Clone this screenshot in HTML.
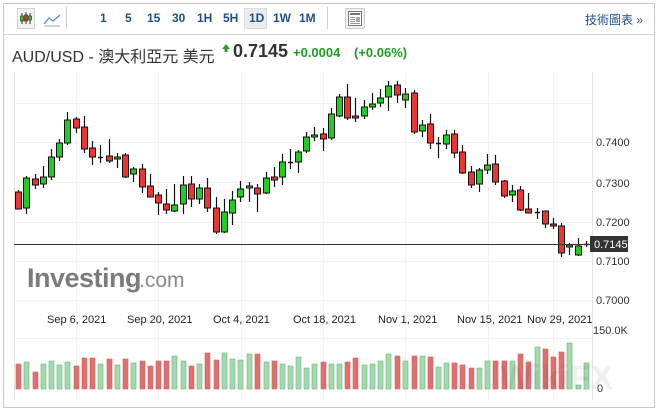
<!DOCTYPE html>
<html><head><meta charset="utf-8"><style>
*{margin:0;padding:0;box-sizing:border-box}
body{width:658px;height:409px;background:#fff;font-family:"Liberation Sans","Noto Sans CJK TC",sans-serif;position:relative;overflow:hidden}
.frame{position:absolute;left:3px;top:3px;width:652px;height:405px;border:1px solid #c8c8c8}
.tb{position:absolute;left:3px;top:3px;width:652px;height:32px;border-bottom:1px solid #d6d6d6}
.t{position:absolute;font-size:12px;color:#1d4f91;font-weight:bold;top:11px}
.sep{position:absolute;top:7px;width:1px;height:22px;background:#d0d0d0}
</style></head><body>
<div class="frame"></div>
<div class="tb"></div>
<div style="position:absolute;left:17px;top:8px;width:18px;height:21px;border:1px solid #d4d4d4;background:#f3f3f3"></div>
<svg style="position:absolute;left:17px;top:8px" width="18" height="21"><path d="M5 5v11M9 4v12M13 5v11" stroke="#333" stroke-width="1"/><rect x="3.5" y="8" width="3" height="5" fill="#2c2" stroke="#333" stroke-width=".7"/><rect x="7.5" y="7" width="3" height="6" fill="#e22" stroke="#333" stroke-width=".7"/><rect x="11.5" y="8" width="3" height="4" fill="#2c2" stroke="#333" stroke-width=".7"/></svg>
<svg style="position:absolute;left:42px;top:10px" width="20" height="18"><path d="M2 14L7 8L11 11L18 5" stroke="#5a8ec5" stroke-width="1.3" fill="none"/><path d="M2 16H18" stroke="#9ab" stroke-width="1"/></svg>
<div class="sep" style="left:66px"></div>
<div class="t" style="left:100px">1</div>
<div class="t" style="left:125px">5</div>
<div class="t" style="left:147px">15</div>
<div class="t" style="left:172px">30</div>
<div class="t" style="left:197px">1H</div>
<div class="t" style="left:223px">5H</div>
<div style="position:absolute;left:244px;top:8px;width:23px;height:21px;background:#ececec;border:1px solid #dcdcdc"></div>
<div class="t" style="left:249px">1D</div>
<div class="t" style="left:273px">1W</div>
<div class="t" style="left:299px">1M</div>
<div class="sep" style="left:327px"></div>
<div style="position:absolute;left:345px;top:8px;width:20px;height:21px;border:1px solid #ccc;background:#f2f2f2"></div>
<svg style="position:absolute;left:348px;top:11px" width="14" height="15"><rect x="0.5" y="0.5" width="13" height="14" fill="#fff" stroke="#777"/><rect x="2" y="2" width="10" height="2" fill="#777"/><path d="M2 6.5h5M2 8.5h5M2 10.5h5M2 12.5h10" stroke="#999"/><rect x="8" y="6" width="4" height="5" fill="#aaa"/></svg>
<div style="position:absolute;left:585px;top:11px;font-size:12px;color:#1d4f91">技術圖表 »</div>

<div style="position:absolute;left:12px;top:43px;font-size:16px;color:#333;white-space:nowrap">AUD/USD - 澳大利亞元 美元</div>
<svg style="position:absolute;left:222px;top:44px" width="8" height="8"><path d="M4 0L8 5H5.5V8H2.5V5H0Z" fill="#2a9d2a"/></svg>
<div style="position:absolute;left:233px;top:41px;font-size:18px;font-weight:bold;color:#333">0.7145</div>
<div style="position:absolute;left:293px;top:45px;font-size:13px;font-weight:bold;color:#1e9e1e">+0.0004</div>
<div style="position:absolute;left:354px;top:45px;font-size:13px;font-weight:bold;color:#1e9e1e">(+0.06%)</div>

<svg id="c" style="position:absolute;left:0;top:0" width="658" height="409" font-family="Liberation Sans, sans-serif">
<g stroke="#f1f2f5" stroke-width="1">
<path d="M14 103.5H592M14 142.5H592M14 182.5H592M14 222.5H592M14 261.5H592M14 300.5H592"/>
<path d="M76.5 72V400M158.5 72V400M241.5 72V400M323.5 72V400M405.5 72V400M488.5 72V400M553.5 72V400"/>
<path d="M14 338.5H592"/>
</g>
<path d="M14.5 72V400" stroke="#e2e4ea"/>
<path d="M592.5 72V400" stroke="#e2e4ea"/>
<g id="cs"></g>
<g id="vs"></g>
<path d="M14 244.5H590" stroke="#333" stroke-width="1"/>
<rect x="590" y="236" width="38" height="16" fill="#333"/>
<text x="594" y="248" font-size="11" fill="#fff">0.7145</text>
<g font-size="11" fill="#333">
<text x="596" y="146">0.7400</text>
<text x="596" y="187">0.7300</text>
<text x="596" y="226">0.7200</text>
<text x="596" y="265">0.7100</text>
<text x="596" y="304">0.7000</text>
<text x="593" y="334">150.0K</text>
<text x="597" y="392">0</text>
</g>
<g font-size="11" fill="#222">
<text x="47" y="323">Sep 6, 2021</text>
<text x="127" y="323">Sep 20, 2021</text>
<text x="213" y="323">Oct 4, 2021</text>
<text x="293" y="323">Oct 18, 2021</text>
<text x="378" y="323">Nov 1, 2021</text>
<text x="457" y="323">Nov 15, 2021</text>
<text x="527" y="323">Nov 29, 2021</text>
</g>
<text x="27" y="287" font-size="27" font-weight="bold" fill="#7b7b7b" letter-spacing="-0.5">Investing</text>
<text x="139" y="287" font-size="21" fill="#8a8a8a">.com</text>
<text x="500" y="389" font-size="34" font-weight="bold" fill="#000" opacity="0.06">WikiFX</text>
</svg>
<script>
var C=[[18,'R',192,209,190,209],[26,'G',178,208,176,214],[35,'R',179,185,174,189],[43,'G',177,184,166,188],[51,'G',157,177,149,180],[59,'G',143,157,139,161],[67,'G',120,143,112,145],[76,'R',119,128,117,133],[84,'R',127,149,116,153],[92,'R',148,157,141,165],[100,'D',157,157,145,163],[109,'R',156,161,139,163],[117,'G',157,159,153,168],[125,'R',155,177,153,178],[133,'G',169,174,167,182],[142,'R',169,187,164,193],[150,'R',186,197,174,197],[158,'R',195,203,192,215],[166,'R',204,210,189,214],[174,'G',205,211,184,212],[183,'G',185,204,176,214],[191,'R',184,199,176,207],[199,'G',188,199,184,204],[207,'R',188,208,178,212],[216,'R',208,232,197,234],[224,'G',212,232,199,233],[232,'G',200,213,191,225],[240,'G',189,197,181,202],[249,'G',186,188,182,202],[257,'R',188,194,184,212],[266,'G',178,193,172,194],[274,'R',177,180,167,187],[282,'G',162,177,154,185],[290,'D',162,162,149,169],[298,'G',152,162,150,173],[306,'G',137,151,132,153],[314,'G',135,137,127,141],[323,'R',134,139,128,151],[331,'G',114,138,108,140],[339,'G',97,116,94,117],[347,'R',97,118,84,120],[355,'R',116,118,98,122],[364,'G',107,116,100,119],[372,'G',104,107,93,110],[380,'G',98,103,89,107],[388,'G',86,97,81,111],[397,'R',85,95,81,103],[405,'G',94,100,88,108],[414,'R',93,132,90,134],[422,'G',125,131,120,137],[430,'R',124,143,114,149],[438,'D',143,143,137,158],[446,'G',135,144,130,149],[454,'R',134,153,130,158],[462,'R',152,173,145,174],[471,'R',172,185,166,188],[479,'G',170,184,168,192],[487,'G',165,170,154,174],[495,'R',164,182,155,185],[504,'R',181,196,180,198],[512,'G',191,195,185,202],[520,'R',190,210,186,211],[528,'R',209,213,193,213],[537,'D',212,212,208,219],[545,'R',211,224,211,228],[553,'R',224,226,218,229],[561,'R',226,253,223,257],[569,'G',245,247,243,255],[578,'G',246,255,238,256],[586,'D',244,244,241,247]];
var V=[364,362,372,364,361,365,362,366,358,358,364,359,365,359,363,361,366,361,361,356,361,366,364,353,360,353,359,360,354,354,362,361,364,366,357,368,364,362,364,364,362,358,365,364,361,354,356,361,356,356,357,367,363,363,365,368,368,361,361,361,361,354,362,347,349,357,352,343,385,363,383];
var VC=['G','G','R','G','G','G','G','R','R','G','R','G','R','G','R','G','R','R','G','R','G','G','R','R','R','G','G','G','G','R','R','G','G','G','G','G','G','R','R','G','R','G','R','G','R','G','R','R','G','R','G','G','R','R','R','G','G','R','R','G','G','R','R','G','R','R','R','G','R','G','G'];
var s='',v='';
C.forEach(function(c,i){var x=c[0],f=c[1]=='G'?'#22cc22':c[1]=='R'?'#ee3333':'#333';
s+='<path d="M'+(x+.5)+' '+c[4]+'V'+c[5]+'" stroke="#111" stroke-width="1.2"/>';
if(c[1]=='D')s+='<path d="M'+(x-2)+' '+(c[2]+.5)+'H'+(x+3)+'" stroke="#111" stroke-width="1.5"/>';
else s+='<rect x="'+(x-2.5)+'" y="'+c[2]+'" width="6" height="'+Math.max(2,c[3]-c[2])+'" fill="'+f+'" stroke="#111" stroke-width="1"/>';
var t=V[i]||362,g=c[1]!='R';
v+='<rect x="'+(x-2)+'" y="'+t+'" width="5" height="'+(389-t)+'" fill="'+(g?'#a3d9ae':'#e07070')+'" stroke="'+(g?'#6cb67c':'#d46060')+'" stroke-width=".6"/>';});
document.getElementById('cs').innerHTML=s;document.getElementById('vs').innerHTML=v;
</script>
</body></html>
